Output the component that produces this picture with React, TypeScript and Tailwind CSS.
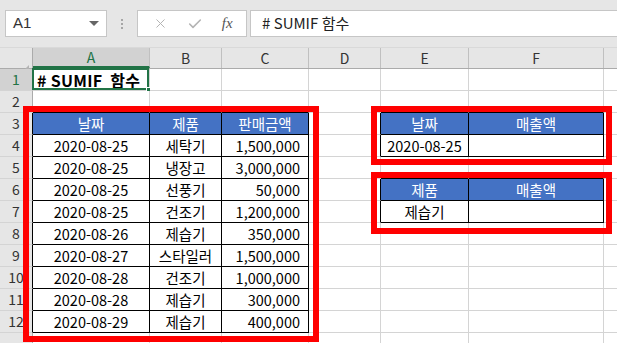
import { X, Check } from 'lucide-react'
import clsx from 'clsx'

const colWidths = ['w-[117px]', 'w-[72px]', 'w-[87px]', 'w-[72px]', 'w-[88px]', 'w-[135px]', 'w-[80px]']
const colLabels = ['A', 'B', 'C', 'D', 'E', 'F', '']

const data: Record<number, string[]> = {
  3: ['날짜', '제품', '판매금액', '', '날짜', '매출액'],
  4: ['2020-08-25', '세탁기', '1,500,000', '', '2020-08-25', ''],
  5: ['2020-08-25', '냉장고', '3,000,000'],
  6: ['2020-08-25', '선풍기', '50,000', '', '제품', '매출액'],
  7: ['2020-08-25', '건조기', '1,200,000', '', '제습기', ''],
  8: ['2020-08-26', '제습기', '350,000'],
  9: ['2020-08-27', '스타일러', '1,500,000'],
  10: ['2020-08-28', '건조기', '1,000,000'],
  11: ['2020-08-28', '제습기', '300,000'],
  12: ['2020-08-29', '제습기', '400,000'],
}

const rows = [1, 2, 3, 4, 5, 6, 7, 8, 9, 10, 11, 12, 13]

function inTable(r: number, c: number) {
  if (r >= 3 && r <= 12 && c >= 0 && c <= 2) return true
  if (r >= 3 && r <= 4 && (c === 4 || c === 5)) return true
  if (r >= 6 && r <= 7 && (c === 4 || c === 5)) return true
  return false
}

function isHeader(r: number, c: number) {
  return (r === 3 && inTable(r, c)) || (r === 6 && (c === 4 || c === 5))
}

const font = { fontFamily: '"Noto Sans CJK KR", "Noto Sans", sans-serif' }

function Toolbar() {
  return (
    <div className="h-[48px] bg-[#e6e6e6] border-b border-[#d9d9d9] flex items-center pl-[5px] gap-0">
      <div className="w-[102px] h-[27px] bg-white border border-[#c6c6c6] flex items-center justify-between pl-[7px] pr-[7px]">
        <span className="text-[15px] text-[#333]" style={{ fontFamily: '"Liberation Sans", sans-serif' }}>A1</span>
        <span className="w-0 h-0 border-l-[5px] border-r-[5px] border-t-[5px] border-l-transparent border-r-transparent border-t-[#666]" />
      </div>
      <div className="w-[30px] flex flex-col items-center gap-[2px]">
        <span className="w-[2px] h-[2px] bg-[#a6a6a6]" />
        <span className="w-[2px] h-[2px] bg-[#a6a6a6]" />
        <span className="w-[2px] h-[2px] bg-[#a6a6a6]" />
      </div>
      <div className="w-[110px] h-[27px] bg-white border border-[#c6c6c6] flex items-center justify-around pl-[6px] pr-[4px]">
        <X size={15} strokeWidth={1.6} color="#b4b4b4" />
        <Check size={16} strokeWidth={2.4} color="#b4b4b4" />
        <span className="text-[15px] italic text-[#555]" style={{ fontFamily: '"Liberation Serif", serif' }}>fx</span>
      </div>
      <div className="ml-[3px] flex-1 h-[27px] bg-white border border-[#c6c6c6] border-r-0 flex items-center pl-[11px]">
        <span className="text-[15px] text-[#222]" style={font}># SUMIF 함수</span>
      </div>
    </div>
  )
}

function ColumnHeader() {
  return (
    <div className="flex h-[21px] bg-[#e6e6e6] border-b border-[#ababab]">
      <div className="w-[33px] shrink-0 h-full border-r border-[#ababab] flex items-end justify-end pr-[3px] pb-[3px]">
        <span className="w-0 h-0 border-l-[13px] border-t-[13px] border-l-transparent border-t-transparent border-r-0 border-b-0 border-[#b4b4b4] border-b-[13px] border-b-[#b4b4b4] -mb-[13px]" />
      </div>
      {colLabels.map((l, i) => (
        <div
          key={i}
          className={clsx(
            colWidths[i],
            'shrink-0 h-full border-r border-[#c0c0c0] flex items-center justify-center text-[14px]',
            i === 0 ? 'bg-[#d2d2d2] text-[#217346] border-b-2 border-b-[#217346]' : 'text-[#333]',
          )}
          style={font}
        >
          {l}
        </div>
      ))}
    </div>
  )
}

function Cell({ r, c }: { r: number; c: number }) {
  const t = inTable(r, c)
  const right = t || inTable(r, c + 1)
  const bottom = t || inTable(r + 1, c)
  const head = isHeader(r, c)
  const text = data[r]?.[c] ?? ''
  const isNum = c === 2 && r > 3
  return (
    <div
      className={clsx(
        colWidths[c],
        'shrink-0 h-full border-r border-b flex items-center text-[14.5px] relative',
        right ? 'border-r-black' : 'border-r-[#d4d4d4]',
        bottom ? 'border-b-black' : 'border-b-[#d4d4d4]',
        head ? 'bg-[#4472c4] text-white' : 'bg-white text-black',
        isNum ? 'justify-end pr-[8px]' : 'justify-center',
      )}
      style={font}
    >
      {r === 1 && c === 0 ? (
        <>
          <span className="absolute left-[4px] font-bold text-[16px] tracking-[0.3px] whitespace-nowrap">
            # SUMIF&nbsp; 함수
          </span>
          <div className="absolute -left-[1px] -top-[1px] right-0 bottom-0 border-2 border-[#217346]" />
          <div className="absolute -right-[3px] -bottom-[3px] w-[6px] h-[6px] bg-[#217346] border border-white" />
        </>
      ) : (
        text
      )}
    </div>
  )
}

export default function App() {
  return (
    <div className="w-[617px] h-[343px] overflow-hidden bg-white relative">
      <Toolbar />
      <ColumnHeader />
      {rows.map((r) => (
        <div key={r} className="flex h-[22px]">
          <div
            className={clsx(
              'w-[33px] shrink-0 h-full border-r border-b border-b-[#d4d4d4] flex items-center justify-center text-[14px]',
              inTable(r, 0) ? 'border-r-black' : 'border-r-[#ababab]',
              r === 1 ? 'bg-[#d2d2d2] text-[#217346]' : 'bg-[#e6e6e6] text-[#333]',
            )}
            style={font}
          >
            {r < 13 ? r : ''}
          </div>
          {colLabels.map((_, c) => (
            <Cell key={c} r={r} c={c} />
          ))}
        </div>
      ))}

      {/* red annotation boxes */}
      <div className="absolute left-[23px] top-[106px] w-[296px] h-[236px] border-[6px] border-[#ff0000] pointer-events-none" />
      <div className="absolute left-[371px] top-[106px] w-[241px] h-[59px] border-[6px] border-[#ff0000] pointer-events-none" />
      <div className="absolute left-[371px] top-[172px] w-[241px] h-[62px] border-[6px] border-[#ff0000] pointer-events-none" />
    </div>
  )
}
